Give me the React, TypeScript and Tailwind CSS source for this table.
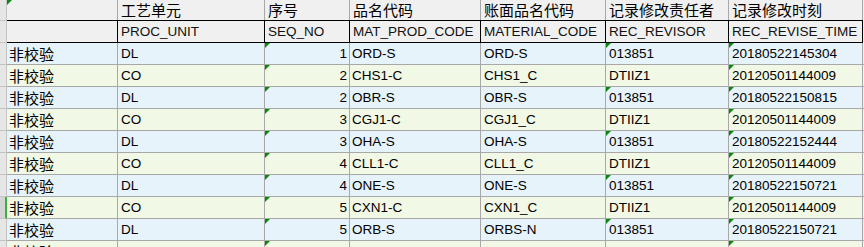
import React from 'react';

interface Row {
  check: string;
  unit: string;
  seq: number;
  prod: string;
  material: string;
  revisor: string;
  time: string;
}

const rows: Row[] = [
  { check: '非校验', unit: 'DL', seq: 1, prod: 'ORD-S', material: 'ORD-S', revisor: '013851', time: '20180522145304' },
  { check: '非校验', unit: 'CO', seq: 2, prod: 'CHS1-C', material: 'CHS1_C', revisor: 'DTIIZ1', time: '20120501144009' },
  { check: '非校验', unit: 'DL', seq: 2, prod: 'OBR-S', material: 'OBR-S', revisor: '013851', time: '20180522150815' },
  { check: '非校验', unit: 'CO', seq: 3, prod: 'CGJ1-C', material: 'CGJ1_C', revisor: 'DTIIZ1', time: '20120501144009' },
  { check: '非校验', unit: 'DL', seq: 3, prod: 'OHA-S', material: 'OHA-S', revisor: '013851', time: '20180522152444' },
  { check: '非校验', unit: 'CO', seq: 4, prod: 'CLL1-C', material: 'CLL1_C', revisor: 'DTIIZ1', time: '20120501144009' },
  { check: '非校验', unit: 'DL', seq: 4, prod: 'ONE-S', material: 'ONE-S', revisor: '013851', time: '20180522150721' },
  { check: '非校验', unit: 'CO', seq: 5, prod: 'CXN1-C', material: 'CXN1_C', revisor: 'DTIIZ1', time: '20120501144009' },
  { check: '非校验', unit: 'DL', seq: 5, prod: 'ORB-S', material: 'ORBS-N', revisor: '013851', time: '20180522150721' },
  { check: '非校验', unit: 'CO', seq: 7, prod: 'CHH1-C', material: 'CHH1_C', revisor: 'DTIIZ1', time: '20120501144009' },
];

const cn = "font-['Noto_Sans_CJK_SC',sans-serif] text-[15px]";

// little green "note" mark in the top-left corner of a cell
const Mark = () => (
  <span className="absolute left-0 top-0 w-0 h-0 border-t-[5px] border-r-[5px] border-t-[#0a8a0a] border-r-transparent" />
);

const App = () => {
  return (
    <div className="w-[864px] h-[247px] overflow-hidden bg-white text-[13.5px] text-black leading-none font-['Liberation_Sans','Noto_Sans_CJK_SC',sans-serif]">
      {/* row 1: chinese captions */}
      <div className="flex h-[20px]">
        <div className="w-[7px] shrink-0 bg-[#e6e6e6] border-r border-[#c4c4c4]" />
        <div className="relative w-[111px] shrink-0 bg-[#f0f0f0] border-r border-[#a8a8a8]">
          <Mark />
        </div>
        <div className={`w-[147px] shrink-0 bg-[#f0f0f0] border-r border-[#a8a8a8] pl-[3px] pt-[2px] ${cn}`}>工艺单元</div>
        <div className={`w-[85px] shrink-0 bg-[#f0f0f0] border-r border-[#a8a8a8] pl-[3px] pt-[2px] ${cn}`}>序号</div>
        <div className={`w-[131px] shrink-0 bg-[#f0f0f0] border-r border-[#a8a8a8] pl-[3px] pt-[2px] ${cn}`}>品名代码</div>
        <div className={`w-[125px] shrink-0 bg-[#f0f0f0] border-r border-[#a8a8a8] pl-[3px] pt-[2px] ${cn}`}>账面品名代码</div>
        <div className={`w-[123px] shrink-0 bg-[#f0f0f0] border-r border-[#a8a8a8] pl-[3px] pt-[2px] ${cn}`}>记录修改责任者</div>
        <div className={`w-[134px] shrink-0 bg-[#f0f0f0] border-r border-[#a8a8a8] pl-[3px] pt-[2px] ${cn}`}>记录修改时刻</div>
        <div className="flex-1 bg-[#f0f0f0]" />
      </div>

      {/* row 2: field names */}
      <div className="flex h-[23px]">
        <div className="w-[7px] shrink-0 bg-[#e6e6e6] border-r border-y border-[#c4c4c4]" />
        {[
          ['', 111],
          ['PROC_UNIT', 147],
          ['SEQ_NO', 85],
          ['MAT_PROD_CODE', 131],
          ['MATERIAL_CODE', 125],
          ['REC_REVISOR', 123],
          ['REC_REVISE_TIME', 134],
        ].map(([label, w]) => (
          <div
            key={String(label) + w}
            style={{ width: w as number }}
            className="shrink-0 bg-[#f0f0f0] border-y border-r border-black pl-[3px] flex items-center whitespace-nowrap overflow-hidden text-[#111]"
          >
            {label}
          </div>
        ))}
        <div className="flex-1 bg-[#f0f0f0]" />
      </div>

      {/* data rows */}
      {rows.map((r, i) => {
        const bg = i % 2 === 0 ? 'bg-[#e6f3fa]' : 'bg-[#f1f8e5]';
        const cell = `shrink-0 h-full border-r border-b border-[#a8a8a8] flex items-center whitespace-nowrap overflow-hidden ${bg}`;
        const selected = i === 7;
        return (
          <div key={i} className="flex h-[22px]">
            <div
              className={`w-[7px] shrink-0 border-b border-[#c4c4c4] ${
                selected ? 'bg-[#d4d4d4] border-r-2 border-r-[#3fae3f]' : 'bg-[#e6e6e6] border-r border-r-[#c4c4c4]'
              }`}
            />
            <div className={`${cell} w-[111px] pl-[2px] ${cn}`}>{r.check}</div>
            <div className={`${cell} w-[147px] pl-[3px]`}>{r.unit}</div>
            <div className={`${cell} relative w-[85px] pr-[2px] justify-end`}>
              <Mark />
              {r.seq}
            </div>
            <div className={`${cell} w-[131px] pl-[2px]`}>{r.prod}</div>
            <div className={`${cell} w-[125px] pl-[3px]`}>{r.material}</div>
            <div className={`${cell} relative w-[123px] pl-[3px]`}>
              {r.revisor === '013851' && <Mark />}
              {r.revisor}
            </div>
            <div className={`${cell} relative w-[134px] pl-[3px]`}>
              <Mark />
              {r.time}
            </div>
            <div className={`flex-1 h-full border-b border-[#a8a8a8] ${bg}`} />
          </div>
        );
      })}
    </div>
  );
};

export default App;
